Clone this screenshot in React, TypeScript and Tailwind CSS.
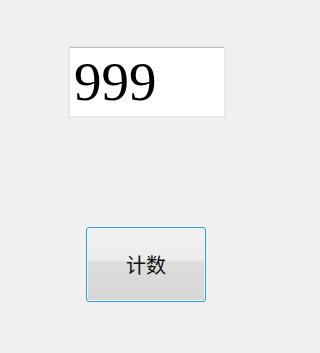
import React, { useState } from 'react';

function App() {
    const [count, setCount] = useState<number>(999);

    return (
        <div className="w-full min-h-[353px] bg-[#f0f0f0] font-['Liberation_Sans','Noto_Sans_CJK_SC',sans-serif]">
            <div className="w-[283px] flex flex-col items-start">
                <div className="mt-[47px] ml-[70px] w-[154px] h-[69px] bg-white border-t border-[#bdbdbd] shadow-[0_0_0_2px_#e8e8e8] flex items-center">
                    <span className="pl-[4px] -mt-[2px] text-[55px] leading-none text-black font-['Liberation_Serif',serif]">
                        {count}
                    </span>
                </div>

                <button
                    type="button"
                    onClick={() => setCount(count + 1)}
                    className="mt-[111px] ml-[86px] w-[120px] h-[75px] rounded-[3px] border border-[#3c9dcc] shadow-[inset_0_0_0_1px_#e6f4fb] bg-[linear-gradient(to_bottom,#f1f1f1_0%,#ececec_45%,#dddddd_46%,#d6d6d6_100%)] text-[20px] font-normal text-[#111] flex items-center justify-center font-['Noto_Sans_CJK_SC',sans-serif]"
                >
                    计数
                </button>
            </div>
        </div>
    );
}

export default App;
